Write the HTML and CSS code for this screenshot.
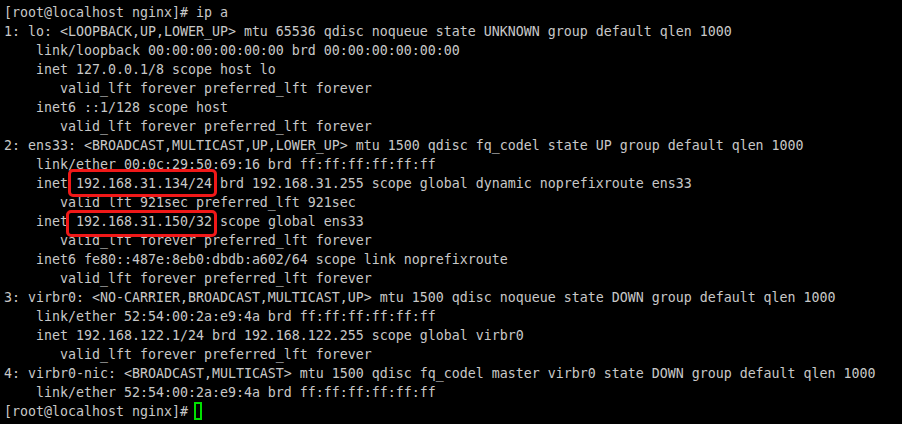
FILE: index.html
```
<!DOCTYPE html>
<html>
<head>
<meta charset="utf-8">
<link rel="stylesheet" href="styles.css">
</head>
<body>
<pre class="term">[root@localhost nginx]# ip a
1: lo: &lt;LOOPBACK,UP,LOWER_UP&gt; mtu 65536 qdisc noqueue state UNKNOWN group default qlen 1000
    link/loopback 00:00:00:00:00:00 brd 00:00:00:00:00:00
    inet 127.0.0.1/8 scope host lo
       valid_lft forever preferred_lft forever
    inet6 ::1/128 scope host
       valid_lft forever preferred_lft forever
2: ens33: &lt;BROADCAST,MULTICAST,UP,LOWER_UP&gt; mtu 1500 qdisc fq_codel state UP group default qlen 1000
    link/ether 00:0c:29:50:69:16 brd ff:ff:ff:ff:ff:ff
    inet <span class="mark mark-a">192.168.31.134/24</span> brd 192.168.31.255 scope global dynamic noprefixroute ens33
       valid_lft 921sec preferred_lft 921sec
    inet <span class="mark mark-b">192.168.31.150/32</span> scope global ens33
       valid_lft forever preferred_lft forever
    inet6 fe80::487e:8eb0:dbdb:a602/64 scope link noprefixroute
       valid_lft forever preferred_lft forever
3: virbr0: &lt;NO-CARRIER,BROADCAST,MULTICAST,UP&gt; mtu 1500 qdisc noqueue state DOWN group default qlen 1000
    link/ether 52:54:00:2a:e9:4a brd ff:ff:ff:ff:ff:ff
    inet 192.168.122.1/24 brd 192.168.122.255 scope global virbr0
       valid_lft forever preferred_lft forever
4: virbr0-nic: &lt;BROADCAST,MULTICAST&gt; mtu 1500 qdisc fq_codel master virbr0 state DOWN group default qlen 1000
    link/ether 52:54:00:2a:e9:4a brd ff:ff:ff:ff:ff:ff
[root@localhost nginx]# <span class="cursor"></span></pre>
</body>
</html>
```
FILE: styles.css
```
html, body {
  margin: 0;
  padding: 0;
  background: #000000;
}
.term {
  margin: 0;
  padding: 3px 0 0 4px;
  font-family: "DejaVu Sans Mono", "Liberation Mono", monospace;
  font-size: 13.29px;
  line-height: 19px;
  color: #c8c8c8;
  white-space: pre;
}
.mark {
  position: relative;
  display: inline-block;
  height: 19px;
  vertical-align: top;
}
.mark::after {
  content: "";
  position: absolute;
  border: 3px solid #f01818;
  border-radius: 5px;
}
.mark-a::after {
  left: -8px;
  right: -5px;
  top: -5px;
  bottom: -4px;
}
.mark-b::after {
  left: -10px;
  right: -5px;
  top: -2px;
  bottom: -6px;
}
.cursor {
  display: inline-block;
  box-sizing: border-box;
  width: 8px;
  height: 18px;
  border: 2px solid #00e000;
  vertical-align: top;
  margin-left: -2px;
}
```
